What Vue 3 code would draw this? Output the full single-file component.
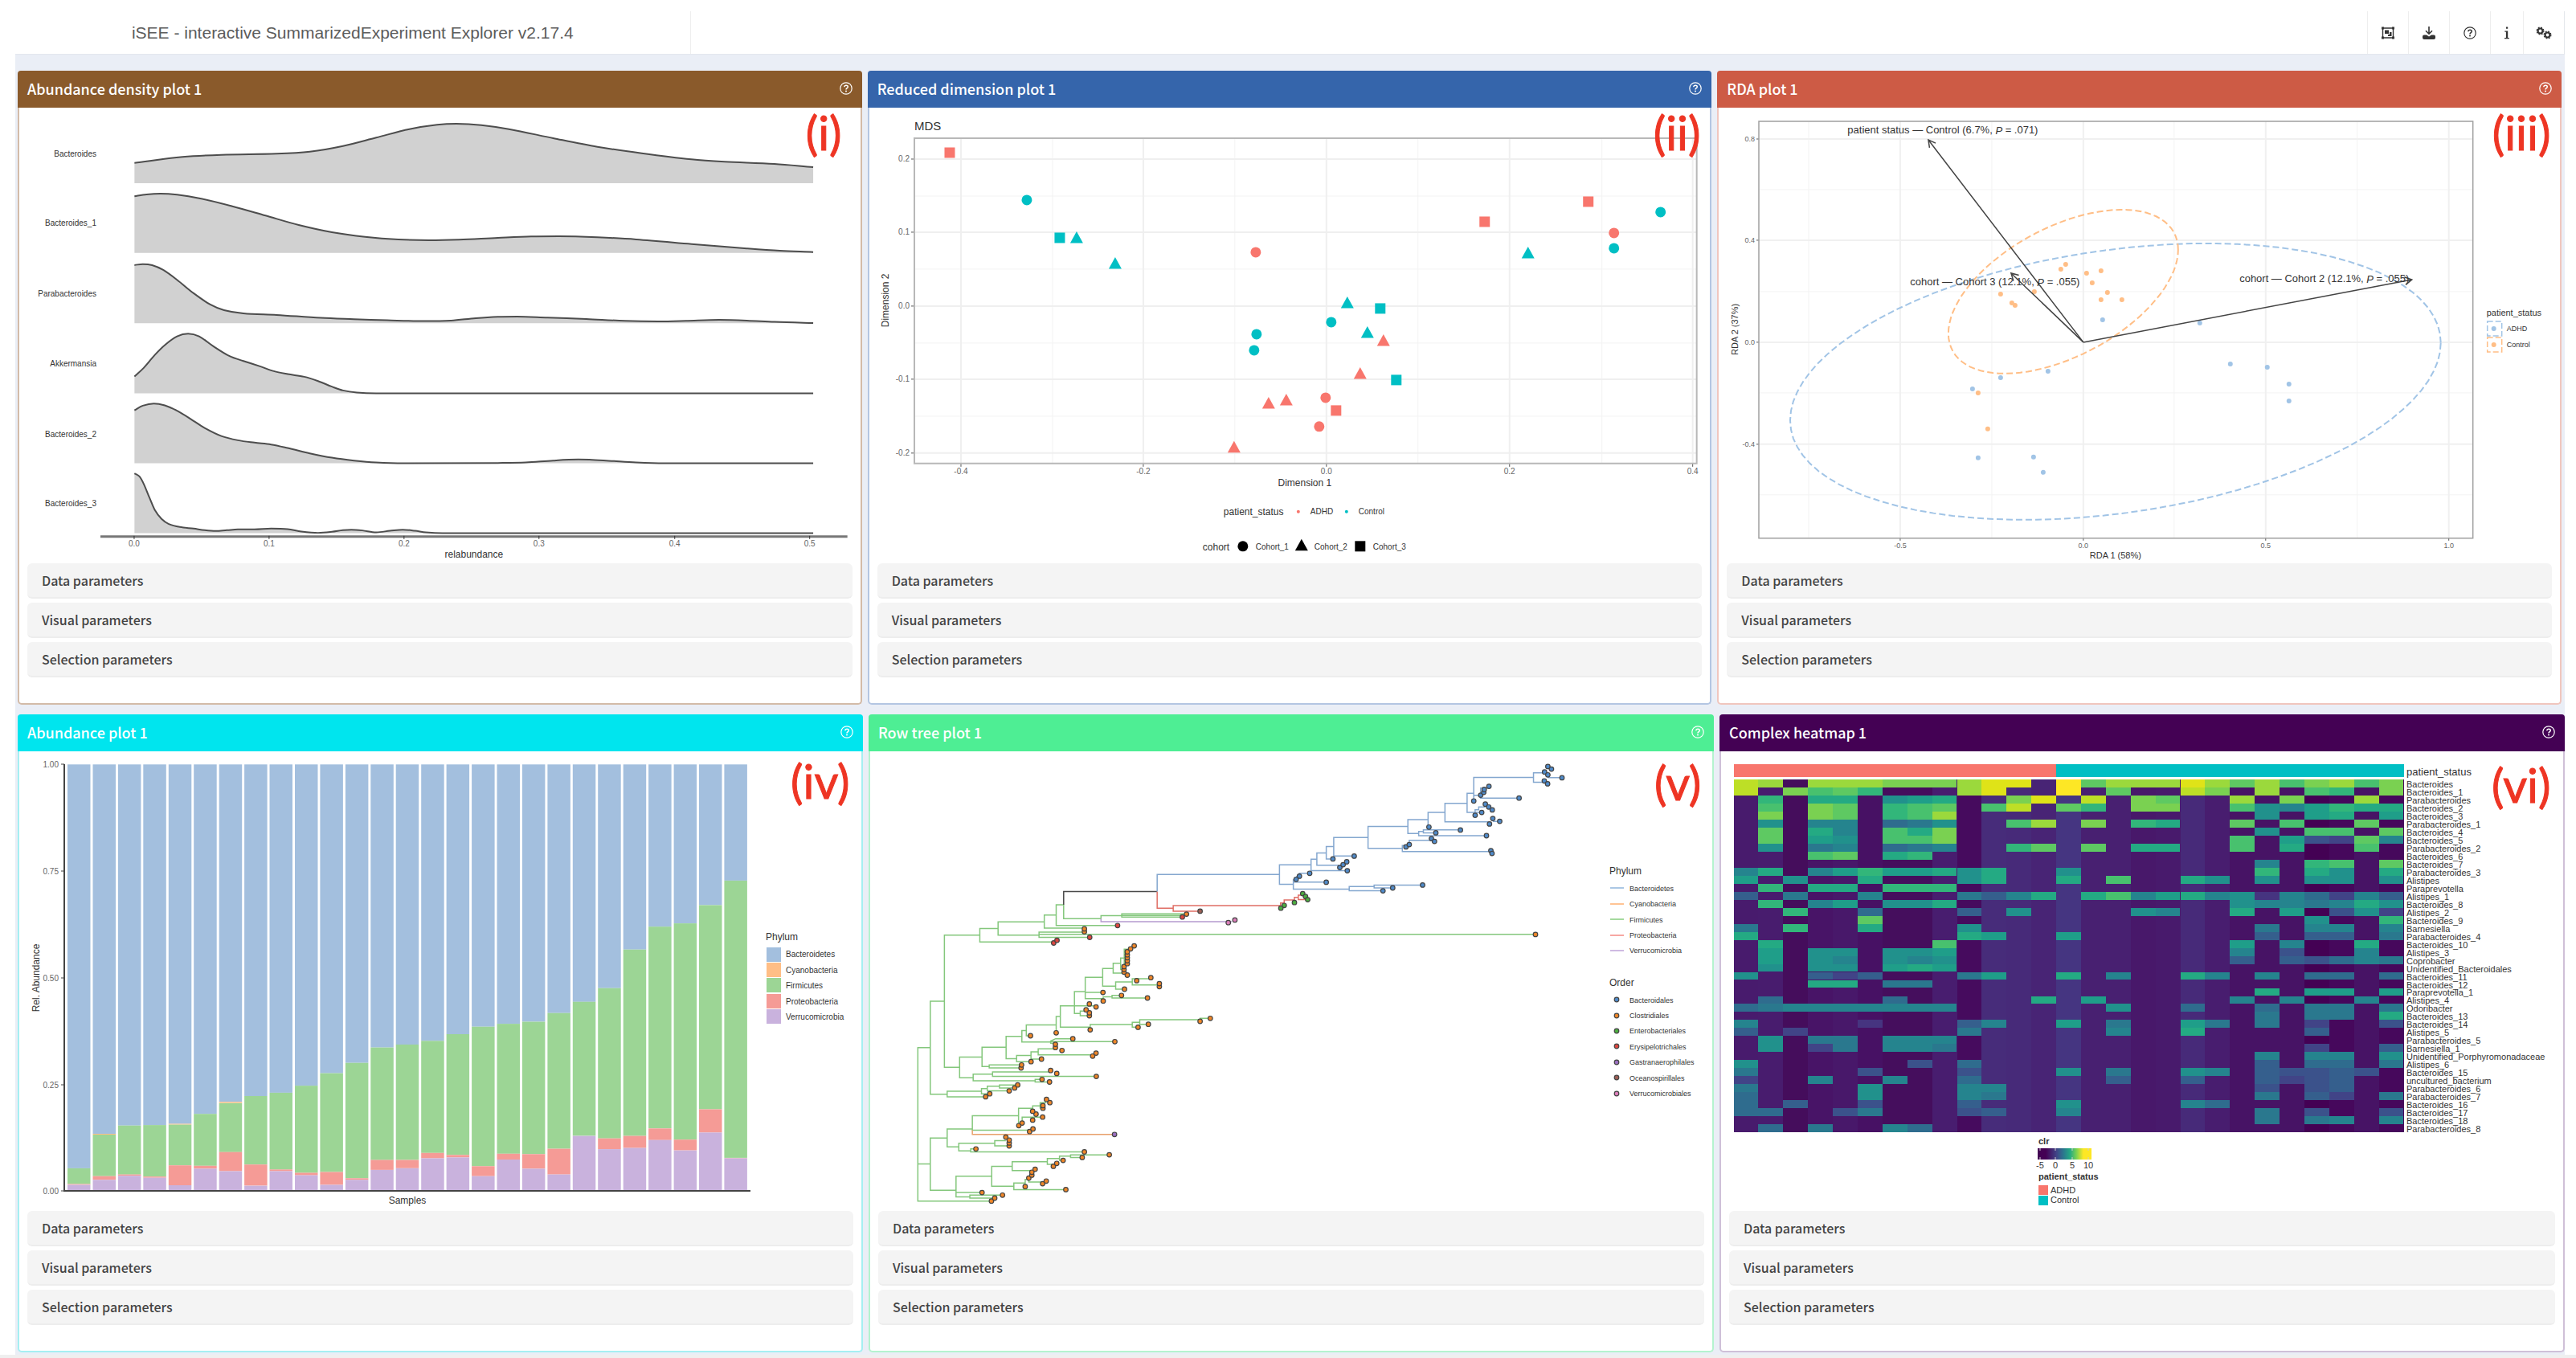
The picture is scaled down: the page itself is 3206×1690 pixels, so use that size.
<script setup>
// Each plot keeps its own units; a frame turns them into drawing coordinates.
const frame = (ox, oy, kx, ky) => ({
  x: v => Math.round(ox + v / kx),
  y: v => Math.round(oy + v / ky),
  fx: v => +(ox + v / kx).toFixed(1),
  fy: v => +(oy + v / ky).toFixed(1),
  t: `translate(${ox} ${oy}) scale(${1 / kx} ${1 / ky})`
})

const rows = [
  [
    { id: 'density', tag: '(i)', tagX: 1003, tagY: 187, title: 'Abundance density plot 1', color: '#8a5a2b', edge: '#d3bba8', box: '24 134 1047 567' },
    { id: 'mds', tag: '(ii)', tagX: 2059, tagY: 187, title: 'Reduced dimension plot 1', color: '#3565ab', edge: '#b4c6e2', box: '1083 134 1047 567' },
    { id: 'rda', tag: '(iii)', tagX: 3102, tagY: 187, title: 'RDA plot 1', color: '#cd5b45', edge: '#f0c6be', box: '2139 134 1047 567' }
  ],
  [
    { id: 'bars', tag: '(iv)', tagX: 984, tagY: 994, title: 'Abundance plot 1', color: '#00e5ee', edge: '#a5eff2', box: '24 935 1048 572' },
    { id: 'tree', tag: '(v)', tagX: 2059, tagY: 996, title: 'Row tree plot 1', color: '#4eee94', edge: '#b4f3cf', box: '1083 935 1048 572' },
    { id: 'heat', tag: '(vi)', tagX: 3101, tagY: 999, title: 'Complex heatmap 1', color: '#440154', edge: '#cfc0d8', box: '2142 935 1048 572' }
  ]
]
const sections = ['Data parameters', 'Visual parameters', 'Selection parameters']

/* ---------- abundance density ---------- */
const D1 = frame(0, 0, 1.452, 3)
const D2 = frame(0, 430, 1.452, 3)
const smooth = (pts, f) => {
  const p = pts.map(([x, y]) => [f.fx(x), f.fy(y)])
  let d = `M${p[0]}`
  for (let i = 0; i < p.length - 1; i++) {
    const [x0, y0] = p[i]
    const [x1, y1] = p[i + 1]
    const slope = j => {
      const a = p[Math.max(j - 1, 0)]
      const b = p[Math.min(j + 1, p.length - 1)]
      const s = (b[1] - a[1]) / (b[0] - a[0])
      if (j > 0 && j < p.length - 1 && (p[j][1] - a[1]) * (b[1] - p[j][1]) <= 0) return 0
      return s
    }
    const h = (x1 - x0) / 3
    d += `C${(x0 + h).toFixed(1)},${(y0 + h * slope(i)).toFixed(1)} ${(x1 - h).toFixed(1)},${(y1 - h * slope(i + 1)).toFixed(1)} ${x1},${y1}`
  }
  return d
}
const ridges = [
  { name: 'Bacteroides', f: D1, base: 684, label: 575, pts: [[243,608],[330,586],[400,578],[500,574],[560,566],[620,545],[680,514],[740,482],[790,466],[825,462],[870,467],[920,482],[1000,516],[1080,548],[1160,572],[1250,595],[1310,604],[1400,612],[1470,624]] },
  { name: 'Bacteroides_1', f: D1, base: 944, label: 835, pts: [[243,733],[265,726],[290,723],[320,727],[360,740],[420,770],[480,805],[540,840],[600,867],[660,884],[720,894],[775,897],[830,895],[900,888],[960,883],[1010,882],[1080,886],[1150,894],[1250,911],[1350,928],[1410,936],[1470,941]] },
  { name: 'Parabacteroides', f: D1, base: 1207, label: 1098, pts: [[243,990],[258,986],[275,990],[295,1008],[320,1045],[350,1095],[380,1137],[405,1158],[440,1170],[500,1176],[580,1187],[640,1192],[700,1196],[770,1199],[815,1197],[860,1188],[900,1183],[935,1182],[990,1186],[1060,1191],[1130,1198],[1190,1200],[1240,1198],[1300,1194],[1350,1197],[1400,1202],[1470,1206]] },
  { name: 'Akkermansia', f: D2, base: 179, label: 69, pts: [[243,116],[260,83],[280,35],[300,-5],[320,-34],[340,-44],[360,-34],[385,2],[415,40],[440,58],[470,78],[495,96],[520,107],[550,117],[575,133],[600,154],[620,168],[645,176],[680,179],[1470,179]] },
  { name: 'Bacteroides_2', f: D2, base: 440, label: 332, pts: [[243,242],[258,225],[278,217],[298,224],[320,244],[345,275],[370,308],[400,338],[430,354],[460,363],[490,370],[520,383],[560,403],[600,419],[640,430],[680,437],[730,440],[900,439],[950,437],[1000,430],[1045,426],[1070,427],[1110,432],[1150,437],[1200,440],[1470,440]] },
  { name: 'Bacteroides_3', f: D2, base: 701, label: 592, pts: [[243,478],[252,489],[260,518],[270,568],[280,615],[292,648],[305,667],[325,678],[350,684],[370,690],[390,693],[410,690],[430,687],[460,687],[490,684],[520,686],[545,695],[575,700],[600,696],[620,690],[635,688],[655,691],[680,698],[705,692],[728,688],[750,692],[770,698],[800,701],[1470,701]] }
].map(r => {
  const line = smooth(r.pts, r.f)
  return { name: r.name, y: r.f.y(r.label), line, area: `${line}V${r.f.fy(r.base)}H${r.f.fx(243)}Z` }
})
const densityTicks = [[243, '0.0'], [487, '0.1'], [731, '0.2'], [975, '0.3'], [1219, '0.4'], [1463, '0.5']]

/* ---------- reduced dimensions ---------- */
const M = frame(1070, 80, 1.4654, 2.45)
const mdsX = [[186, '-0.4'], [519, '-0.2'], [853, '0.0'], [1187, '0.2'], [1521, '0.4']]
const mdsY = [[289, '0.2'], [513, '0.1'], [737, '0.0'], [961, '-0.1'], [1185, '-0.2']]
const ADHD = '#f8766d'
const CONTROL = '#00bfc4'
const mdsPoints = [
  [ADHD, 's', [[165,269],[1142,480],[1331,418],[871,1056]]],
  [ADHD, 'c', [[724,573],[1377,515],[852,1016],[840,1106]]],
  [ADHD, 't', [[957,845],[915,945],[779,1026],[748,1037],[685,1171]]],
  [CONTROL, 's', [[367,529],[951,746],[981,962]]],
  [CONTROL, 'c', [[306,415],[1463,451],[1378,561],[861,787],[726,822],[721,872]]],
  [CONTROL, 't', [[397,532],[468,609],[1221,579],[891,730],[928,820]]]
].flatMap(([fill, kind, pts]) => pts.map(([x, y]) => ({ fill, d: marker(kind, M.x(x), M.y(y)) })))
function marker(kind, x, y) {
  if (kind === 's') return `M${x - 6.5} ${y - 6.5}h13v13h-13z`
  if (kind === 't') return `M${x} ${y - 9}l8 14.5h-16z`
  return `M${x - 6.5} ${y}a6.5 6.5 0 1 1 13 0a6.5 6.5 0 1 1 -13 0z`
}
const cohorts = [['c', 701, 724, 'Cohort_1'], ['t', 808, 831, 'Cohort_2'], ['s', 915, 938, 'Cohort_3']]

/* ---------- RDA ---------- */
const R = frame(2130, 0, 1.4572, 2.1778)
const rdaX = [[343, '-0.5'], [675, '0.0'], [1006, '0.5'], [1337, '1.0']]
const rdaY = [[376, '0.8'], [652, '0.4'], [928, '0.0'], [1204, '-0.4']]
const ellipse = (cx, cy, w, h, rho) => {
  const s = Math.sqrt(1 - rho * rho)
  let d = ''
  for (let i = 0; i < 90; i++) {
    const a = (i / 90) * Math.PI * 2
    d += `${i ? 'L' : 'M'}${(cx + w * Math.cos(a)).toFixed(1)} ${(cy - h * (rho * Math.cos(a) + s * Math.sin(a))).toFixed(1)}`
  }
  return d + 'Z'
}
const rdaBlue = '#a1c4e6'
const rdaOrange = '#ffbe86'
const ellipses = [
  { c: rdaBlue, d: ellipse(2633, 475, 405, 172, 0.28) },
  { c: rdaOrange, d: ellipse(2568, 363, 143, 102, 0.51) }
]
const rdaPoints = [
  [rdaOrange, [[642,717],[634,729],[681,741],[707,734],[691,766],[586,790],[524,796],[719,793],[707,812],[745,812],[545,820],[551,828],[484,1065],[501,1163]]],
  [rdaBlue, [[710,866],[886,876],[942,987],[1008,996],[1047,1042],[1048,1087],[611,1006],[524,1024],[474,1055],[484,1242],[585,1240],[602,1280]]]
].flatMap(([c, pts]) => pts.map(([x, y]) => ({ c, x: R.x(x), y: R.y(y) })))
const arrows = [[393, 378], [543, 741], [1270, 757]].map(([tx, ty]) => {
  const x0 = R.x(675), y0 = R.y(928), x = R.x(tx), y = R.y(ty)
  const a = Math.atan2(y - y0, x - x0)
  const wing = s => `${(x - 10 * Math.cos(a + s)).toFixed(1)} ${(y - 10 * Math.sin(a + s)).toFixed(1)}`
  return `M${x0} ${y0}L${x} ${y}M${wing(0.5)}L${x} ${y}L${wing(-0.5)}`
})
const arrowLabels = [
  [419, 353, 'patient status — Control (6.7%, ', ' = .071)'],
  [515, 764, 'cohort — Cohort 3 (12.1%, ', ' = .055)'],
  [1112, 755, 'cohort — Cohort 2 (12.1%, ', ' = .055)']
]

/* ---------- abundance bars ---------- */
const B = frame(0, 880, 1.452, 1.936)
const phyla = [['Bacteroidetes', '#a3bfde'], ['Cyanobacteria', '#ffbe86'], ['Firmicutes', '#9cd595'], ['Proteobacteria', '#f59b96'], ['Verrucomicrobia', '#c9b2dd']]
// tops of: cyanobacteria, firmicutes, proteobacteria, verrucomicrobia
const samples = [
  [1111,1111,1149,1151],[1028,1030,1130,1139],[1008,1008,1126,1129],[1007,1007,1131,1134],[1004,1006,1104,1152],[980,980,1105,1112],
  [951,954,1072,1118],[937,937,1102,1153],[929,929,1114,1118],[912,912,1122,1128],[882,882,1120,1151],[857,857,1135,1139],
  [820,820,1091,1115],[813,813,1091,1111],[804,804,1074,1087],[788,788,1079,1085],[770,770,1106,1130],[763,763,1076,1090],
  [758,758,1077,1112],[737,737,1064,1126],[710,710,1033,1033],[677,677,1039,1065],[584,584,1033,1062],[529,529,1015,1043],
  [521,521,1042,1068],[477,477,969,1025],[418,418,1086,1087]
]
const barRects = samples.flatMap((tops, i) => {
  const edges = [138, ...tops, 1166]
  return phyla.map(([, fill], k) => ({
    fill,
    x: +((122 + i * 45.65) / 1.452).toFixed(1),
    y: B.fy(edges[k]),
    h: +((edges[k + 1] - edges[k]) / 1.936).toFixed(1)
  })).filter(r => r.h > 0)
})
const barTicks = [[138, '1.00'], [395, '0.75'], [652, '0.50'], [909, '0.25'], [1166, '0.00']]

/* ---------- row tree ---------- */
const L = frame(1070, 880, 2.904, 2.45)
const T = frame(1600, 880, 2.904, 2.8)
const branches = [
  { t: L.t, c: '#84c77c', d: `M478 1506H210V1038H255M210 1393H255M306 897H255V1180H316M434 695H306V1098H361M500 675H434V716H700M667 655H500V695H648M810 686H648V702H830M648 693H2442M710 634H667V674H810M737 603H710V666H931M737 603V645H872V636H947M1181 630H947V640H1165M947 635H1170
M442 1067H361V1130H410M480 1119H410V1139H634M659 1135H634V1143H686M690 1112H480V1126H855M529 1037H442V1096H468M585 1091H468V1100H583M586 1004H529V1072H567M619 1062H567V1081H619M645 1051H619V1073H657M700 1042H645V1060H842M602 986H586V1021H690M770 1011H708L690 1018V1025H705M690 1020H922M710 969H602V1002H617M725 943H710V993M776 911H725V976H833M985 968H833V984M1012 961H985V976H1006M1267 949H1230V953H1012V967H1043M815 867H776V934H797M776 911H850M830 927H797V941H830M878 824H815V889H880M815 870H878M880 896V883H912M946 879H912V887H1040M916 797H878V851H925M985 838H925V860H957M1050 828H985V847H1083M943 781H916V811H960M956 765H943V800H955M980 738H956V790M960 738V785
M440 1171H316V1188H455M461 1163H440V1179H470M505 1156H461V1170H540M570 1152H505V1161H560
M316 1314H255V1473H348M407 1286H316V1341H358M488 1330H358V1353H401M528 1322H488V1338H540M420 1347H401V1356H812M574 1246H407V1290H615M625 1223H574V1276M655 1216H625V1232M675 1206H652V1224M587 1268V1250H661M477 1430H348V1493H398M348 1480H442M516 1488H398V1497H488M551 1400H477V1461H557M678 1386H551V1413H620M722 1376H678V1394H700M762 1369H722V1382H735M902 1365H762V1373H804M598 1451H557V1471H744M598 1462V1440H611V1448H661` },
  { t: L.t, c: '#4a4a4a', d: 'M737 603V562H1075' },
  { t: L.t, c: '#b59bcf', d: 'M872 645V654H1345' },
  { t: L.t, c: '#e8a06a', d: 'M407 1290V1303H920' },
  { t: L.t, c: '#e06f66', d: 'M1075 562V613H1133M1229 622H1133V605H1521V597H1534V588H1571V580H1585V573H1601M1585 580V587H1617' },
  { t: L.t, c: '#84a7cf', d: 'M1075 562V510H1517M1631 481H1517V540H1567' },
  { t: T.t, c: '#84a7cf', d: 'M113 530H92V570H223M87 579H50V590H38M230 634H28V600M28 610H147M320 625H230V640H351M495 620H320V630H386M147 508H113V551H196M174 486H147V529H171M298 454H174V519H248M442 416H298V492H422M435 482H422V503H740M447 479V464H527M515 392H442V440H481M498 433H481V448H725M632 428H498V438H543M576 367H515V418M656 335H576V400H737M749 398H774M680 300H656V367H709M685 367V358H698V348H722M896 245H680V327M680 307H705V317H843M705 300V282H730M935 229H896V262H940M948 246H998' }
]
const orders = [['Bacteroidales', '#4f8ac9'], ['Clostridiales', '#ef8628'], ['Enterobacteriales', '#4cae3f'], ['Erysipelotrichales', '#dd4740'], ['Gastranaerophilales', '#9a6fc0'], ['Oceanospirillales', '#9c5f55'], ['Verrucomicrobiales', '#dd7fbb']]
const tips = [
  [T, 0, [[87,579],[50,589],[38,600],[147,610],[352,640],[387,630],[495,620],[196,559],[208,549],[221,539],[223,570],[171,529],[248,519],[742,500],[746,510],[435,487],[447,479],[527,458],[538,468],[726,448],[543,438],[632,428],[518,418],[737,407],[749,388],[774,398],[685,377],[709,367],[722,338],[734,348],[747,358],[680,327],[705,307],[716,297],[718,287],[735,276],[844,317],[936,226],[948,236],[948,207],[961,216],[935,257],[947,267],[999,246]]],
  [T, 1, [[903,792]]],
  [T, 2, [[62,650],[72,660],[80,671],[32,681],[-5,691]]],
  [L, 2, [[1522,613]]],
  [L, 3, [[701,719],[713,711],[831,702],[932,666],[1166,640]]],
  [L, 4, [[921,1303]]],
  [L, 5, [[1230,622]]],
  [L, 6, [[1332,657],[1356,649]]],
  [L, 1, [[1181,631],[812,685],[812,676],[476,1506],[488,1497],[516,1488],[442,1480],[745,1471],[598,1462],[661,1453],[674,1445],[611,1436],[622,1427],[622,1418],[634,1409],[700,1400],[712,1391],[735,1382],[804,1373],[902,1365],[812,1356],[420,1347],[540,1338],[540,1329],[540,1320],[528,1311],[614,1294],[626,1286],[575,1276],[587,1268],[625,1259],[661,1250],[637,1241],[625,1232],[662,1223],[662,1215],[687,1206],[675,1196],[455,1188],[470,1179],[540,1170],[560,1161],[571,1152],[686,1143],[659,1135],[855,1126],[712,1117],[690,1108],[583,1100],[585,1091],[619,1081],[657,1073],[842,1064],[854,1055],[731,1047],[707,1038],[707,1028],[922,1020],[770,1011],[617,1002],[710,993],[833,984],[1006,976],[1043,967],[1230,958],[1267,949],[830,941],[830,932],[818,923],[854,914],[830,905],[880,896],[1040,887],[946,879],[879,870],[957,860],[1083,852],[1083,843],[1001,834],[1052,825],[967,817],[955,808],[955,800],[955,791],[967,782],[967,773],[967,764],[967,755],[967,746],[979,737],[992,728]]]
].flatMap(([f, o, pts]) => pts.map(([x, y]) => ({ x: f.fx(x), y: f.fy(y), fill: orders[o][1] })))
const phylumLines = ['#8fb4dd', '#ffb070', '#86cc7e', '#f58a84', '#bfa3d8']

/* ---------- heatmap ---------- */
const H = frame(2130, 880, 2.904, 2.45)
const viridis = ['#440154', '#471365', '#482475', '#463480', '#414487', '#3b528b', '#355f8d', '#2f6c8e', '#2a788e', '#25848e', '#21918c', '#1f9e89', '#24aa83', '#32b67a', '#48c16e', '#5ec962', '#7ad151', '#9bd93c', '#bddf26', '#dfe318', '#fde725']
const rest = ['#481b6d', '#481c6e', '#450d5c', '#481467', '#48186a', '#471164', '#450e5d', '#450e5d', '#481d6f', '#460b5e', '#472c7a', '#472a79', '#482475', '#453581', '#482071', '#482071', '#48186a', '#481a6c', '#472a79', '#481d6f', '#471365', '#471365', '#471365', '#440154', '#46085c', '#471365', '#46085c']
const genera = [
  ['Bacteroides', 'ih.hhhggghjj.kfhhhjhfhegheg'],
  ['Bacteroides_1', 'i.gefd...hj..k.f..ig.h.ed.g'],
  ['Parabacteroides', '.d.cc.abc..gj.i.gf..h.g..h.'],
  ['Bacteroides_2', '.e.gf.def.ei.fd.gg..ea9bdcc'],
  ['Bacteroides_3', '.g.gf.deh............a.bc.b'],
  ['Parabacteroides_1', '.a.99.78a..eh.g.dc..f.e..f.'],
  ['Bacteroides_4', '.f.c9.ecg............a.ee.f'],
  ['Bacteroides_5', '.f.ba.eeg...........e.b54f9'],
  ['Parabacteroides_2', '.a.89.789..df.f.cc..e.c..e.'],
  ['Bacteroides_6', '...ef.cd...................'],
  ['Bacteroides_7', '.....................9.de.f'],
  ['Parabacteroides_3', '9c.9bdbbcac..a.......d.ca.c'],
  ['Alistipes', 'b.a..c...ac..c.e..ca.a.aa.a'],
  ['Paraprevotella', '.d.cc.ddd..................'],
  ['Alistipes_1', '6.8..9...869c.ce9bc9a397496'],
  ['Bacteroides_8', '.d.9b.aac...........a9989ca'],
  ['Alistipes_2', '..d..7...6.a....a9..c.b.5a4'],
  ['Bacteroides_9', '.....f.................a..d'],
  ['Barnesiella', '8.d..c...a...........8.99.9'],
  ['Parabacteroides_4', 'c........cb..b.......6.66.8'],
  ['Bacteroides_10', '.c......e...........b.9..c.'],
  ['Alistipes_3', '.b.aa.aab...........9.5..9.'],
  ['Coprobacter', '.b.a9.a9a...........6.65798'],
  ['Unidentified_Bacteroidales', '.a.aa.bcb..................'],
  ['Bacteroides_11', 'a..646...8b..c.9..c9.9.77.7'],
  ['Bacteroides_12', '...cc.88...................'],
  ['Paraprevotella_1', '.....................c.bb.b'],
  ['Alistipes_4', '.7....7.....c.b.....9.9..9.'],
  ['Odoribacter', '789999999......a..7..7.88.8'],
  ['Bacteroides_13', '.....................8.88.c'],
  ['Bacteroides_14', '9....3...69..b.8..b8.8.4..5'],
  ['Alistipes_5', '6.4......8.....9..c....6...'],
  ['Parabacteroides_5', '.a.88.999..................'],
  ['Barnesiella_1', '.a.48.998..............4..6'],
  ['Unidentified_Porphyromonadaceae', '.....................9.99.a'],
  ['Alistipes_6', 'a......5.7...........6.77.8'],
  ['Bacteroides_15', '8....5...5...a.8..a9.65565.'],
  ['uncultured_bacterium', '4..9..9..7.....6..6..6456..'],
  ['Parabacteroides_6', '8....a...99..........5.56..'],
  ['Parabacteroides_7', '7....a...98..........8.64.8'],
  ['Bacteroides_16', '7.6..5...6...a....97.......'],
  ['Bacteroides_17', '77..58...56..9.......8.5..5'],
  ['Bacteroides_18', '.....................8.89.9'],
  ['Parabacteroides_8', '.7.8..97...................']
]
const heatX = 2157.5, heatY = 970, cellW = 30.89, cellH = 9.98
const cells = genera.flatMap(([, row], r) => [...row].flatMap((ch, c) => ch === '.' ? [] : [{
  x: +(heatX + c * cellW).toFixed(1), y: +(heatY + r * cellH).toFixed(1), fill: viridis[parseInt(ch, 36)]
}]))
const clr = [[1187, '-5'], [1243, '0'], [1303, '5'], [1363, '10']]
</script>

<template>
  <div class="page">
    <header class="topbar">
      <h1 class="brand">iSEE - interactive SummarizedExperiment Explorer v2.17.4</h1>
      <nav class="tools">
        <button type="button" class="tool" aria-label="Organization">
          <svg viewBox="0 0 16 16" width="16" height="16"><path fill="none" stroke="#333" stroke-width="1.4" d="M1.500 2h13v12h-13z"/><path fill="#333" d="M0 .5h3v3H0zM13 .5h3v3h-3zM0 12.5h3v3H0zM13 12.5h3v3h-3zM4 4.500h5v4.500H4zM8 10h2V7h2.500v5H8z"/></svg>
        </button>
        <button type="button" class="tool" aria-label="Export">
          <svg viewBox="0 0 16 16" width="16" height="16"><path fill="none" stroke="#333" stroke-width="1.600" d="M8 0v8.500M4 5.200l4 4 4-4"/><path fill="#333" d="M2 10.500h3l3 2 3-2h3q2 0 2 2V14q0 2-2 2H2q-2 0-2-2v-1.500q0-2 2-2z"/></svg>
        </button>
        <button type="button" class="tool" aria-label="Documentation">
          <svg viewBox="0 0 16 16" width="16" height="16"><circle cx="8" cy="8" r="7.200" fill="none" stroke="#333" stroke-width="1.200"/><path fill="none" stroke="#333" stroke-width="1.500" d="M5.800 6.300q.2-2.100 2.300-2.100 2.200 0 2.200 1.900 0 1.100-1.200 1.700Q8 8.300 8 9.400"/><circle cx="8" cy="11.600" r="1" fill="#333"/></svg>
        </button>
        <button type="button" class="tool slim" aria-label="Information">
          <svg viewBox="0 0 8 16" width="8" height="16"><path fill="#333" d="M3 .500h2.200v2.300H3zM1.300 5.500h3.900V14h1.600v1.300H1V14h1.900V6.800H1.300z"/></svg>
        </button>
        <button type="button" class="tool" aria-label="Settings">
          <svg viewBox="0 0 20 16" width="20" height="16"><g fill="none" stroke="#333"><circle cx="5.500" cy="5.500" r="2.900" stroke-width="2"/><circle cx="5.500" cy="5.500" r="4.300" stroke-width="1.400" stroke-dasharray="1.800 1.600"/><circle cx="14.500" cy="10.500" r="2.900" stroke-width="2"/><circle cx="14.500" cy="10.500" r="4.300" stroke-width="1.400" stroke-dasharray="1.800 1.600"/></g></svg>
        </button>
      </nav>
    </header>

    <main class="board">
      <div v-for="(row, r) in rows" :key="r" class="row" :class="{ narrow: r === 0 }">
        <section v-for="p in row" :key="p.id" class="panel" :style="{ borderColor: p.edge }">
          <div class="head" :style="{ background: p.color }">
            <h2>{{ p.title }}</h2>
            <button type="button" class="help" :aria-label="'Help for ' + p.title">
              <svg viewBox="0 0 16 16" width="16" height="16"><circle cx="8" cy="8" r="7.200" fill="none" stroke="#fff" stroke-width="1.200"/><path fill="none" stroke="#fff" stroke-width="1.500" d="M5.800 6.300q.2-2.100 2.300-2.100 2.200 0 2.200 1.900 0 1.100-1.200 1.700Q8 8.300 8 9.400"/><circle cx="8" cy="11.600" r="1" fill="#fff"/></svg>
            </button>
          </div>

          <svg class="plot" :viewBox="p.box" role="img" :aria-label="p.title">
            <g v-if="p.id === 'density'">
              <g v-for="g in ridges" :key="g.name">
                <path :d="g.area" fill="#d1d1d1"/>
                <path :d="g.line" fill="none" stroke="#4d4d4d" stroke-width="2"/>
                <text class="s10 end" x="120" :y="g.y">{{ g.name }}</text>
              </g>
              <path d="M125 668H1055" stroke="#777" stroke-width="3"/>
              <g v-for="[x, t] in densityTicks" :key="t">
                <path :d="`M${D1.x(x)} 667v4`" stroke="#333" stroke-width="1"/>
                <text class="s10 mid pale" :x="D1.x(x)" y="677">{{ t }}</text>
              </g>
              <text class="s12 mid" x="590" y="690">relabundance</text>
            </g>

            <g v-else-if="p.id === 'mds'">
              <path v-for="y in [401, 625, 849, 1073]" :key="'y' + y" :d="`M${M.x(101)} ${M.y(y)}H${M.x(1528)}`" stroke="#f3f3f3"/>
              <path v-for="x in [353, 686, 1020, 1355]" :key="'x' + x" :d="`M${M.x(x)} ${M.y(225)}V${M.y(1218)}`" stroke="#f3f3f3"/>
              <g v-for="[y, t] in mdsY" :key="'my' + t">
                <path :d="`M${M.x(101)} ${M.y(y)}H${M.x(1528)}`" stroke="#efefef" stroke-width="2"/>
                <path :d="`M${M.x(101) - 4} ${M.y(y)}h4`" stroke="#555"/>
                <text class="s10 end pale" :x="M.x(93)" :y="M.y(y)">{{ t }}</text>
              </g>
              <g v-for="[x, t] in mdsX" :key="'mx' + t">
                <path :d="`M${M.x(x)} ${M.y(225)}V${M.y(1218)}`" stroke="#efefef" stroke-width="2"/>
                <path :d="`M${M.x(x)} ${M.y(1218)}v4`" stroke="#555"/>
                <text class="s10 mid pale" :x="M.x(x)" :y="M.y(1243)">{{ t }}</text>
              </g>
              <path :d="`M${M.x(101)} ${M.y(225)}H${M.x(1528)}V${M.y(1218)}H${M.x(101)}Z`" fill="none" stroke="#b8b8b8" stroke-width="2"/>
              <path v-for="(m, i) in mdsPoints" :key="i" :d="m.d" :fill="m.fill"/>
              <text class="s15" :x="M.x(101)" :y="M.y(188)">MDS</text>
              <text class="s12 mid" :x="M.x(813)" :y="M.y(1277)">Dimension 1</text>
              <text class="s12 mid" :transform="`translate(${M.x(48)} ${M.y(721)}) rotate(-90)`">Dimension 2</text>
              <text class="s12" :x="M.x(665)" :y="M.y(1364)">patient_status</text>
              <circle :cx="M.x(802)" :cy="M.y(1364)" r="2" :fill="ADHD"/>
              <text class="s10" :x="M.x(824)" :y="M.y(1364)">ADHD</text>
              <circle :cx="M.x(890)" :cy="M.y(1364)" r="2" :fill="CONTROL"/>
              <text class="s10" :x="M.x(912)" :y="M.y(1364)">Control</text>
              <text class="s12" :x="M.x(627)" :y="M.y(1472)">cohort</text>
              <g v-for="[k, x, tx, t] in cohorts" :key="t">
                <path :d="marker(k, M.x(x), M.y(1471))"/>
                <text class="s10" :x="M.x(tx)" :y="M.y(1472)">{{ t }}</text>
              </g>
            </g>

            <g v-else-if="p.id === 'rda'">
              <path v-for="y in [514, 790, 1066, 1342]" :key="'y' + y" :d="`M${R.x(86)} ${R.y(y)}H${R.x(1382)}`" stroke="#f3f3f3"/>
              <path v-for="x in [177, 509, 840, 1172]" :key="'x' + x" :d="`M${R.x(x)} ${R.y(328)}V${R.y(1460)}`" stroke="#f3f3f3"/>
              <g v-for="[y, t] in rdaY" :key="'ry' + t">
                <path :d="`M${R.x(86)} ${R.y(y)}H${R.x(1382)}`" stroke="#f0f0f0" stroke-width="2"/>
                <path :d="`M${R.x(86) - 3} ${R.y(y)}h3`" stroke="#555"/>
                <text class="s9 end pale" :x="R.x(79)" :y="R.y(y)">{{ t }}</text>
              </g>
              <g v-for="[x, t] in rdaX" :key="'rx' + t">
                <path :d="`M${R.x(x)} ${R.y(328)}V${R.y(1460)}`" stroke="#f0f0f0" stroke-width="2"/>
                <path :d="`M${R.x(x)} ${R.y(1460)}v3`" stroke="#555"/>
                <text class="s9 mid pale" :x="R.x(x)" :y="R.y(1478)">{{ t }}</text>
              </g>
              <path :d="`M${R.x(86)} ${R.y(328)}H${R.x(1382)}V${R.y(1460)}H${R.x(86)}Z`" fill="none" stroke="#a0a0a0" stroke-width="1.500"/>
              <circle v-for="(d, i) in rdaPoints" :key="i" :cx="d.x" :cy="d.y" r="3" :fill="d.c"/>
              <path v-for="e in ellipses" :key="e.c" :d="e.d" fill="none" :stroke="e.c" stroke-width="2" stroke-dasharray="8 4"/>
              <path v-for="a in arrows" :key="a" :d="a" fill="none" stroke="#444" stroke-width="1.500"/>
              <text v-for="[x, y, a, b] in arrowLabels" :key="a" class="s13 mid" :x="R.x(x)" :y="R.y(y)">{{ a }}<tspan font-style="italic">P</tspan>{{ b }}</text>
              <text class="s11 mid" :x="R.x(733)" :y="R.y(1505)">RDA 1 (58%)</text>
              <text class="s11 mid" :transform="`translate(${R.x(42)} ${R.y(893)}) rotate(-90)`">RDA 2 (37%)</text>
              <text class="s11" :x="R.x(1406)" :y="R.y(847)">patient_status</text>
              <g v-for="(k, i) in [[rdaBlue, 'ADHD'], [rdaOrange, 'Control']]" :key="k[1]">
                <rect :x="R.x(1407)" :y="400 + i * 20" width="18" height="18" fill="none" :stroke="k[0]" stroke-width="1.500" stroke-dasharray="7 3"/>
                <circle :cx="R.x(1420)" :cy="409 + i * 20" r="3" :fill="k[0]"/>
                <text class="s9" :x="R.x(1442)" :y="409 + i * 20">{{ k[1] }}</text>
              </g>
            </g>

            <g v-else-if="p.id === 'bars'">
              <rect v-for="(b, i) in barRects" :key="i" :x="b.x" :y="b.y" width="28.500" :height="b.h" :fill="b.fill"/>
              <path :d="`M${B.x(116)} ${B.y(138)}V${B.y(1166)}H${B.x(1356)}`" fill="none" stroke="#444" stroke-width="2"/>
              <g v-for="[y, t] in barTicks" :key="t">
                <path :d="`M${B.x(116) - 4} ${B.y(y)}h4`" stroke="#444"/>
                <text class="s10 end pale" :x="B.x(106)" :y="B.y(y)">{{ t }}</text>
              </g>
              <text class="s12 mid" :x="B.x(736)" :y="B.y(1188)">Samples</text>
              <text class="s12 mid" :transform="`translate(${B.x(65)} ${B.y(653)}) rotate(-90)`">Rel. Abundance</text>
              <text class="s12" :x="B.x(1384)" :y="B.y(553)">Phylum</text>
              <g v-for="([t, c], i) in phyla" :key="t">
                <rect :x="B.x(1385)" :y="B.y(578 + i * 37.6)" width="18" height="18" :fill="c"/>
                <text class="s10" :x="B.x(1420)" :y="B.y(595 + i * 37.6)">{{ t }}</text>
              </g>
            </g>

            <g v-else-if="p.id === 'tree'">
              <g v-for="(b, i) in branches" :key="i" :transform="b.t">
                <path class="branch" :d="b.d" :stroke="b.c"/>
              </g>
              <circle v-for="(t, i) in tips" :key="'t' + i" :cx="t.x" :cy="t.y" r="2.800" :fill="t.fill" stroke="#444" stroke-width="1.200"/>
              <text class="s12" :x="T.x(1170)" :y="T.y(571)">Phylum</text>
              <g v-for="([t], i) in phyla" :key="t">
                <path :d="`M${T.x(1173)} ${T.y(631 + i * 54.3)}h17`" :stroke="phylumLines[i]" stroke-width="1.500"/>
                <text class="s9" :x="T.x(1243)" :y="T.y(632 + i * 54.3)">{{ t }}</text>
              </g>
              <text class="s12" :x="T.x(1170)" :y="T.y(960)">Order</text>
              <g v-for="([t, c], i) in orders" :key="t">
                <circle :cx="T.x(1197)" :cy="T.y(1020 + i * 54.3)" r="2.800" :fill="c" stroke="#444" stroke-width="1.200"/>
                <text class="s9" :x="T.x(1243)" :y="T.y(1021 + i * 54.3)">{{ t }}</text>
              </g>
            </g>

            <g v-else>
              <defs>
                <linearGradient id="clr">
                  <stop offset="0.150" stop-color="#440154"/>
                  <stop offset="0.350" stop-color="#414487"/>
                  <stop offset="0.480" stop-color="#2a788e"/>
                  <stop offset="0.600" stop-color="#22a884"/>
                  <stop offset="0.720" stop-color="#7ad151"/>
                  <stop offset="0.850" stop-color="#fde725"/>
                </linearGradient>
              </defs>
              <g shape-rendering="crispEdges">
                <rect :x="heatX" y="951" :width="cellW * 13" height="16" :fill="ADHD"/>
                <rect :x="heatX + cellW * 13" y="951" :width="cellW * 14" height="16" :fill="CONTROL"/>
                <rect v-for="(c, i) in rest" :key="i" :x="heatX + i * cellW" :y="heatY" :width="cellW" :height="cellH * 44" :fill="c"/>
                <rect v-for="(c, i) in cells" :key="'c' + i" :x="c.x" :y="c.y" :width="cellW" :height="cellH" :fill="c.fill"/>
              </g>
              <text class="s13" x="2995" y="960">patient_status</text>
              <text v-for="([t], i) in genera" :key="t" class="s11" x="2995" :y="Math.round(heatY + 6 + i * cellH)">{{ t }}</text>
              <text class="s11 bold" x="2537" :y="H.y(1322)">clr</text>
              <rect x="2536" y="1429" width="67" height="14" fill="url(#clr)"/>
              <g v-for="[x, t] in clr" :key="t">
                <path :d="`M${H.x(x)} 1429v3M${H.x(x)} 1440v3`" stroke="#ccc"/>
                <text class="s11 mid" :x="H.x(x)" :y="H.y(1397)">{{ t }}</text>
              </g>
              <text class="s11 bold" x="2537" :y="H.y(1432)">patient_status</text>
              <rect x="2537" y="1475" width="12" height="12" :fill="ADHD"/>
              <rect x="2537" y="1488" width="12" height="12" :fill="CONTROL"/>
              <text class="s11" x="2552" :y="H.y(1472)">ADHD</text>
              <text class="s11" x="2552" :y="H.y(1503)">Control</text>
            </g>
            <text class="tag" :x="p.tagX" :y="p.tagY">{{ p.tag }}</text>
          </svg>

          <div class="params">
            <button v-for="s in sections" :key="s" type="button">{{ s }}</button>
          </div>
        </section>
      </div>
    </main>
    <div class="foot"></div>
  </div>
</template>

<style>
body {
  margin: 0;
  background: #fff;
}
</style>

<style scoped>
.page {
  min-height: 100vh;
  display: flex;
  flex-direction: column;
  font-family: "Noto Sans CJK SC", "Noto Sans", sans-serif;
  color: #444;
}
button {
  font: inherit;
  color: inherit;
  border: 0;
  margin: 0;
  padding: 0;
  background: none;
  text-align: left;
}
svg {
  display: block;
}
.topbar {
  display: flex;
  justify-content: space-between;
  margin: 14px 14px 0 19px;
  height: 53px;
  border-right: 1px solid #e4e7ec;
}
.brand {
  box-sizing: border-box;
  width: 26.5%;
  margin: 0;
  border-right: 1px solid #eee;
  font: 300 21px/54px "Liberation Sans", Arial, sans-serif;
  color: #5c5c5c;
  text-align: center;
  white-space: nowrap;
}
.tools {
  display: flex;
}
.tool {
  box-sizing: border-box;
  width: 51px;
  border-left: 1px solid #eee;
  display: flex;
  align-items: center;
  justify-content: center;
}
.tool.slim {
  width: 41px;
}
.board {
  box-sizing: border-box;
  flex: 1;
  margin: 0 14px 0 19px;
  padding: 20px 0 3px 3px;
  border-top: 1px solid #e3e7ee;
  background: #eaeef6;
  display: flex;
  flex-direction: column;
  gap: 12px;
}
.row {
  display: grid;
  grid-template-columns: repeat(3, minmax(0, 1fr));
  gap: 7px;
}
.row.narrow {
  margin-right: 4px;
}
.panel {
  border: 2px solid;
  border-top: 0;
  border-radius: 5px;
  background: #fff;
}
.head {
  box-sizing: border-box;
  display: flex;
  align-items: center;
  justify-content: space-between;
  height: 46px;
  margin: 0 -2px;
  padding: 0 12px 2px;
  border-radius: 4px 4px 0 0;
  color: #fff;
}
.head h2 {
  margin: 0;
  font-size: 18px;
  line-height: 24px;
  font-weight: 500;
}
.plot {
  width: 100%;
  height: auto;
  overflow: visible;
}
.params {
  display: flex;
  flex-direction: column;
  gap: 5px;
  padding: 0 10px 32px;
}
.params button {
  box-sizing: border-box;
  height: 44px;
  padding: 0 18px;
  border-bottom: 2px solid #ededed;
  border-radius: 6px;
  background: #f4f4f4;
  font-size: 16px;
  line-height: 24px;
  font-weight: 500;
}
.foot {
  height: 5px;
  background: #efefef;
}
.plot text {
  font-family: "Liberation Sans", Arial, sans-serif;
  fill: #333;
  dominant-baseline: central;
}
.plot .s9 { font-size: 9px; }
.plot .s10 { font-size: 10px; }
.plot .s11 { font-size: 11px; }
.plot .s12 { font-size: 12px; }
.plot .s13 { font-size: 13px; }
.plot .s15 { font-size: 15px; }
.plot .mid { text-anchor: middle; }
.plot .end { text-anchor: end; }
.plot .pale { fill: #666; }
.plot .bold { font-weight: 700; }
.plot .branch {
  fill: none;
  stroke-width: 1.5px;
  vector-effect: non-scaling-stroke;
}
.plot .tag {
  font-family: Lato, sans-serif;
  font-size: 58px;
  fill: #ee3524;
  stroke: #ee3524;
  stroke-width: 1px;
  dominant-baseline: alphabetic;
}
</style>
